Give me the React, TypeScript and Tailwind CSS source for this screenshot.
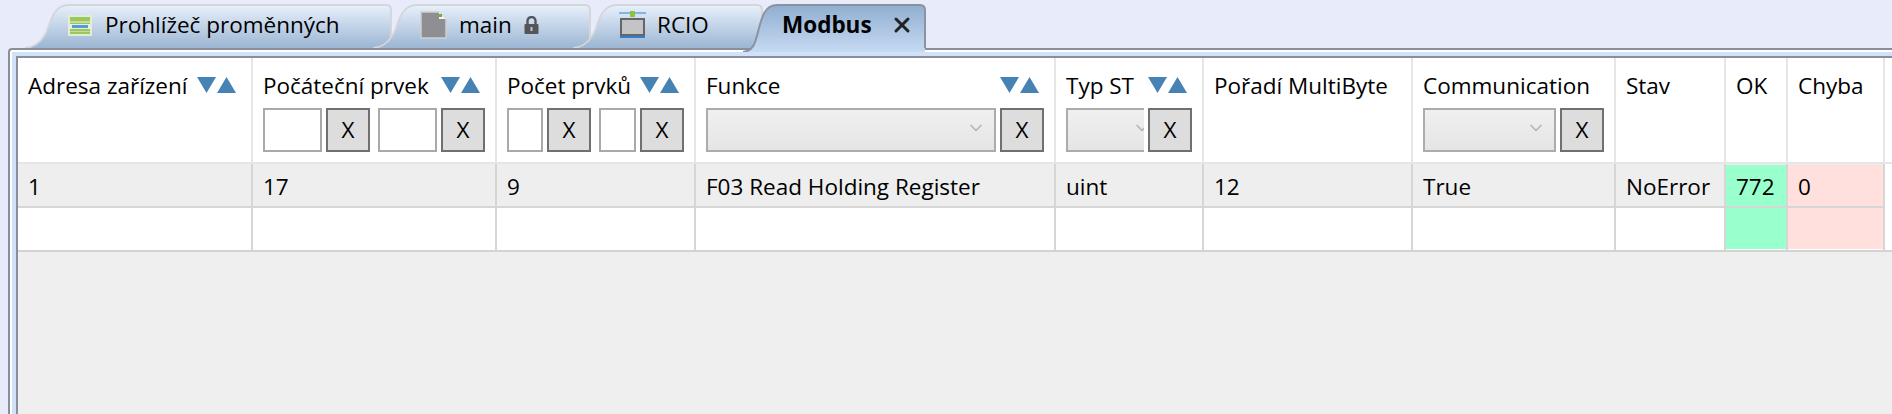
import { ChevronDown, X } from "lucide-react";

const cols = [
  { title: "Adresa zařízení", sort: true },
  { title: "Počáteční prvek", sort: true, filter: "range", inputs: [59, 59] },
  { title: "Počet prvků", sort: true, filter: "range", inputs: [36, 37] },
  { title: "Funkce", sort: true, filter: "combo", combo: 290 },
  { title: "Typ ST", sort: true, filter: "combo", combo: 78, clip: true },
  { title: "Pořadí MultiByte" },
  { title: "Communication", filter: "combo", combo: 133 },
  { title: "Stav" },
  { title: "OK" },
  { title: "Chyba" },
];

const row = ["1", "17", "9", "F03 Read Holding Register", "uint", "12", "True", "NoError", "772", "0"];

function TabShape({ w, h, active }: { w: number; h: number; active?: boolean }) {
  const id = active ? "tabActive" : `tab${w}`;
  const curve = active
    ? `M0,${h} C10,${h - 1} 12,${h - 8} 15,${h - 20} C19,12 22,1 34,1`
    : `M0,44 C12,43 19,35 23,24 C27,12 31,1 44,1`;
  return (
    <svg width={w} height={h} className="absolute left-0 top-0">
      <defs>
        <linearGradient id={id} x1="0" y1="0" x2="0" y2="1">
          <stop offset="0" stopColor={active ? "#90aed0" : "#e8f0fb"} />
          <stop offset="1" stopColor={active ? "#c6daf3" : "#9cb6d3"} />
        </linearGradient>
      </defs>
      <path
        d={`${curve} L${w - 6},1 Q${w - 1},1 ${w - 1},6 L${w - 1},${h} Z`}
        fill={`url(#${id})`}
      />
      <path
        d={`${curve} L${w - 6},1 Q${w - 1},1 ${w - 1},6 L${w - 1},${active ? h - 4 : h}`}
        fill="none"
        stroke={active ? "#8b92a0" : "#d4d6da"}
        strokeWidth="2"
      />
    </svg>
  );
}

function BrowserIcon() {
  return (
    <svg width="24" height="21" viewBox="0 0 24 21" className="shrink-0">
      <rect x="0" y="0" width="24" height="21" fill="#e3edd6" />
      <rect x="2" y="2" width="20" height="17" fill="#9cc65e" />
      <rect x="2" y="6" width="20" height="2" fill="#c3dc98" />
      <rect x="2" y="9" width="20" height="5" fill="#e6efe6" />
      <rect x="4" y="10" width="16" height="3" fill="#5b9bd5" />
      <rect x="2" y="16" width="20" height="1" fill="#c3dc98" />
    </svg>
  );
}

function DocIcon() {
  return (
    <svg width="27" height="28" viewBox="0 0 27 28" className="shrink-0">
      <path d="M1 1 H19 L26 8 V27 H1 Z" fill="#8f8f93" stroke="#cfcfd2" strokeWidth="1.5" />
      <path d="M19 1 L26 8 H19 Z" fill="#f4f6f0" />
      <rect x="19" y="3" width="3" height="3" fill="#6cb52d" />
    </svg>
  );
}

function RcioIcon() {
  return (
    <svg width="27" height="28" viewBox="0 0 27 28" className="shrink-0">
      <rect x="0" y="1" width="27" height="2" fill="#7db7e2" />
      <rect x="11" y="0" width="5" height="6" fill="#8fc13f" />
      <rect x="2" y="8" width="23" height="16" fill="#c4c4c6" stroke="#66666a" strokeWidth="2" />
      <rect x="1" y="25" width="25" height="2" fill="#2f7fd0" />
    </svg>
  );
}

function LockIcon() {
  return (
    <svg width="15" height="18" viewBox="0 0 15 18" className="shrink-0">
      <path d="M3.5 8 V5 A4 4 0 0 1 11.5 5 V8" fill="none" stroke="#555559" strokeWidth="2.4" />
      <rect x="0.5" y="8" width="14" height="10" rx="1" fill="#555559" />
      <rect x="6.5" y="11" width="2" height="4" fill="#b8c6d8" />
    </svg>
  );
}

function SortArrows() {
  return (
    <div className="flex gap-[1px] shrink-0">
      <svg width="19" height="16" viewBox="0 0 19 16">
        <path d="M0 0 H19 L9.5 16 Z" fill="#4682b4" />
      </svg>
      <svg width="19" height="16" viewBox="0 0 19 16">
        <path d="M0 16 H19 L9.5 0 Z" fill="#4682b4" />
      </svg>
    </div>
  );
}

function ClearButton() {
  return (
    <div className="w-[44px] h-[44px] shrink-0 flex items-center justify-center border-2 border-[#707070] bg-[#dddddd] text-[22.5px]">
      X
    </div>
  );
}

function Combo({ width, clip }: { width: number; clip?: boolean }) {
  return (
    <div className="h-[44px] shrink-0 overflow-hidden" style={{ width }}>
      <div
        className="h-[44px] flex items-center justify-end pr-[8px] border-2 border-[#acacac] bg-gradient-to-b from-[#f0f0f0] to-[#e5e5e5]"
        style={{ width: clip ? 96 : width }}
      >
        <ChevronDown size={20} strokeWidth={2} className="text-[#b4b4b4] -mt-[4px]" />
      </div>
    </div>
  );
}

function HeaderCell({ col }: { col: (typeof cols)[number] }) {
  return (
    <div className="h-[106px] border-r-2 border-b-2 border-[#e6e6e6] pl-[10px] pr-[10px] pt-[13px]">
      <div className="h-[28px] flex items-center justify-between pr-[5px] leading-[28px] whitespace-nowrap">
        <span className="mt-[2px]">{col.title}</span>
        {col.sort && <SortArrows />}
      </div>
      {col.filter === "range" && (
        <div className="mt-[9px] flex">
          <div className="h-[44px] shrink-0 border-2 border-[#a8a8ae] bg-white" style={{ width: col.inputs![0] }} />
          <div className="ml-[4px]"><ClearButton /></div>
          <div className="ml-[8px] h-[44px] shrink-0 border-2 border-[#a8a8ae] bg-white" style={{ width: col.inputs![1] }} />
          <div className="ml-[4px]"><ClearButton /></div>
        </div>
      )}
      {col.filter === "combo" && (
        <div className="mt-[9px] flex gap-[4px]">
          <Combo width={col.combo!} clip={col.clip} />
          <ClearButton />
        </div>
      )}
    </div>
  );
}

export default function App() {
  return (
    <div className="w-full h-screen overflow-hidden bg-[#e8ecfa] pt-[4px] text-black text-[22.5px] font-['Open_Sans',sans-serif]">
      {/* Tabs */}
      <div className="flex items-start pl-[25px] h-[44px]">
        <div className="relative w-[367px] h-[44px]">
          <TabShape w={367} h={44} />
          <div className="relative h-full flex items-center pl-[43px] gap-[13px] -mt-[1px]">
            <BrowserIcon />
            <span className="leading-none">Prohlížeč proměnných</span>
          </div>
        </div>
        <div className="relative w-[218px] h-[44px] -ml-[19px]">
          <TabShape w={218} h={44} />
          <div className="relative h-full flex items-center pl-[47px] gap-[12px] -mt-[1px]">
            <DocIcon />
            <span className="leading-none">main</span>
            <LockIcon />
          </div>
        </div>
        <div className="relative w-[190px] h-[44px] -ml-[18px]">
          <TabShape w={190} h={44} />
          <div className="relative h-full flex items-center pl-[46px] gap-[11px] -mt-[1px]">
            <RcioIcon />
            <span className="leading-none">RCIO</span>
          </div>
        </div>
        <div className="relative w-[183px] h-[48px] -ml-[20px] z-10">
          <TabShape w={183} h={48} active />
          <div className="relative h-[44px] flex items-center pl-[39px] gap-[18px] -mt-[1px]">
            <span className="leading-none font-bold">Modbus</span>
            <X size={24} strokeWidth={3} className="text-[#222222]" />
          </div>
        </div>
      </div>

      {/* Panel */}
      <div className="ml-[8px] h-[366px] border-l-2 border-t-2 border-[#888e9c] rounded-tl-[4px] bg-white">
        <div className="h-full ml-[2px] mt-[2px] pl-[4px] pt-[4px] bg-[#cfe2f7]">
          <div className="h-full border-l-2 border-t-2 border-[#888e9c] bg-[#efefef]">
            <div className="grid grid-cols-[235px_244px_199px_360px_148px_209px_203px_110px_62px_97px_1fr] bg-white border-b-2 border-[#d3d3d3]">
              {cols.map((c) => (
                <HeaderCell key={c.title} col={c} />
              ))}
              <div className="border-b-2 border-[#e6e6e6]" />

              {row.map((v, i) => (
                <div
                  key={i}
                  className="h-[44px] border-r-2 border-b-2 border-[#d6d6d6] pl-[10px] flex items-center bg-[#eeeeee]"
                >
                  {i < 8 && <span className="mt-[4px]">{v}</span>}
                  {i === 8 && (
                    <div className="-ml-[10px] pl-[10px] w-[calc(100%+10px)] h-[41px] flex items-center bg-[#99ffcc]">
                      <span className="mt-[4px]">{v}</span>
                    </div>
                  )}
                  {i === 9 && (
                    <div className="-ml-[10px] pl-[10px] w-[calc(100%+10px)] h-[41px] flex items-center bg-[#ffe0dd]">
                      <span className="mt-[4px]">{v}</span>
                    </div>
                  )}
                </div>
              ))}
              <div className="h-[44px]" />

              {row.map((_, i) => (
                <div key={i} className="h-[42px] border-r-2 border-[#d6d6d6]">
                  {i === 8 && <div className="h-[41px] bg-[#99ffcc]" />}
                  {i === 9 && <div className="h-[41px] bg-[#ffe0dd]" />}
                </div>
              ))}
              <div className="h-[42px]" />
            </div>
          </div>
        </div>
      </div>
    </div>
  );
}
